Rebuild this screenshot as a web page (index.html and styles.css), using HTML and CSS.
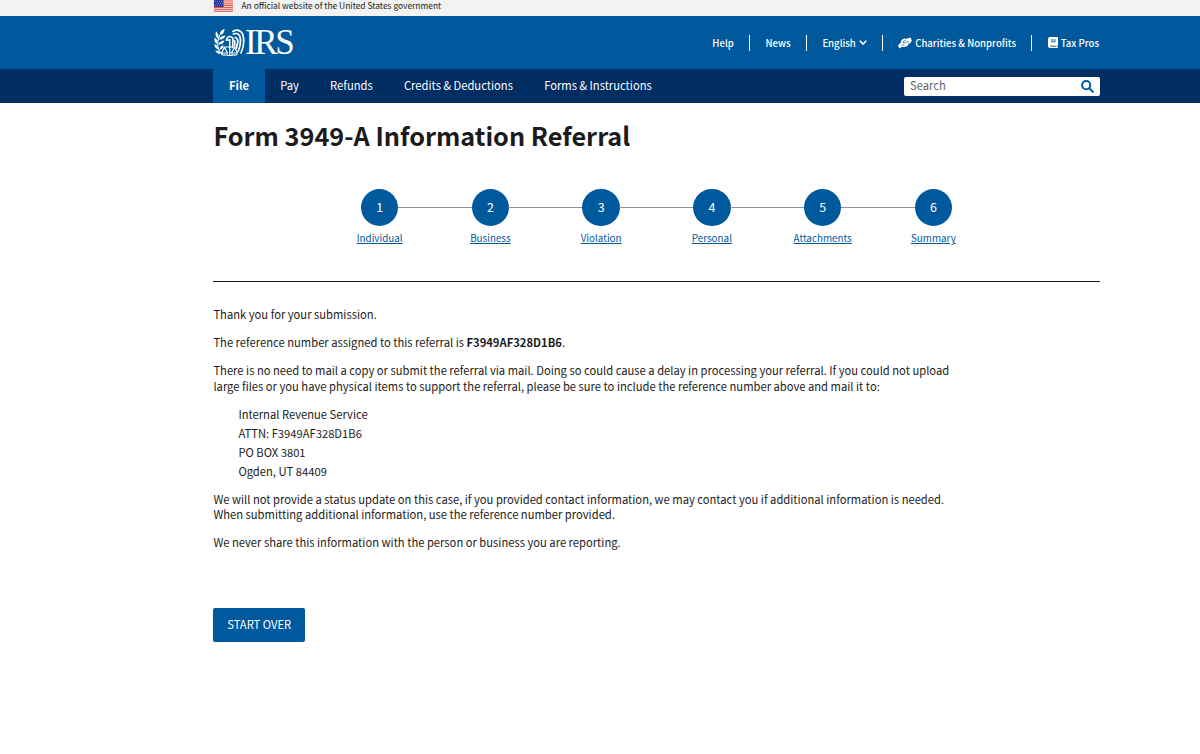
FILE: index.html
```
<!DOCTYPE html>
<html lang="en">
<head>
  <meta charset="UTF-8">
  <title>Form 3949-A Information Referral</title>
  <link rel="stylesheet" href="styles.css">
</head>
<body>
  <!-- Government banner -->
  <div class="banner">
    <div class="container banner-inner">
      <svg class="flag" viewBox="0 0 19 12">
        <rect width="19" height="12" fill="#f6dcd8"/>
        <path d="M0 1h19M0 3.2h19M0 5.4h19M0 7.6h19M0 9.8h19M0 11.7h19" stroke="#dc5a4c" stroke-width="1.1"/>
        <rect width="9.5" height="7" fill="#2a37a0"/>
        <path d="M1 1.5h8M2 3.5h7M1 5.5h8" stroke="#9aa3dc" stroke-width=".8" stroke-dasharray=".9 1.1"/>
      </svg>
      <span>An official website of the United States government</span>
    </div>
  </div>

  <header>
    <div class="container header-inner">
      <a class="logo" href="#">
        <svg class="eagle" viewBox="0 0 31 29" fill="none" stroke="#fff" stroke-linecap="round">
          <!-- Olive branch -->
          <path d="M8.500 27C3 23 2.500 15 5.500 8" stroke-width="1.100"/>
          <path d="M6 7.500C5.500 4.500 8 2 10.500 1.500 10.500 4.500 9 7 6 7.500zM4 11C1.500 9.500 1 6.500 2 4 4 5.500 5 8 4 11zM5 12C6 9.500 8.500 8 11.500 8 10.500 11 8 12.500 5 12zM3 16.500C.5 15 0 12.500 .5 10 3 11.500 4 13.500 3 16.500zM4.500 17C5.500 14.500 7.500 13.200 10.500 13 9.500 16 7.500 17.500 4.500 17zM4 22C1.500 21 .3 19 .3 16.500 2.800 17.500 4.200 19 4 22zM5.500 22C6 19.500 7.500 18 9.500 17.800 9.500 20.500 8.500 22 5.500 22zM6.500 26.500C4 26.500 2 25 1.200 23 4 23 6 24 6.500 26.500z" fill="#fff" stroke="none"/>
          <!-- Head and body -->
          <path d="M12.300 12.800C12.500 9.500 15 8.500 17.300 9.500c1.800 1 2 3 1.400 5V20M12.300 12.800l3.400-.5V20" stroke-width="1.500"/>
          <!-- Wing feathers -->
          <path d="M19 4C22 1.500 27 2.500 28.800 7c1.700 6 1.200 12-1.800 18.500M19.500 6.500c4-1.500 6.300.5 6.800 4 .5 5 0 9-2 13M21 10c2 0 3 2 2.700 5l-1.400 6M20.500 13l.3 5" stroke-width="1.700"/>
          <!-- Scales -->
          <path d="M15.800 19v8M10 19.500h11M10.500 20l-3 5.500h6zM20.500 20l-3 5.500h6zM8 26.800c1 1 4 1 5 0M18 26.800c1 1 4 1 5 0M13.500 28h4.500" stroke-width="1.200"/>
        </svg>
        <span class="logo-text">IRS</span>
      </a>
      <ul class="top-links">
        <li><a href="#">Help</a></li>
        <li><a href="#">News</a></li>
        <li>
          <a href="#">English
            <svg class="chevron" viewBox="0 0 8 6"><path d="M1.200 1.200L4 4l2.800-2.800" fill="none" stroke="#fff" stroke-width="1.600" stroke-linecap="round"/></svg>
          </a>
        </li>
        <li>
          <a href="#">
            <svg class="hands" viewBox="0 0 14 12">
              <path d="M3.500 3L6 1.500 8.500 1.800 12.500.5 13.800 3.500 12.300 6.200 10.500 6.800 9.500 9 6 10 3.500 10 1.500 11.500 0 8.500 2.500 6z" fill="#fff"/>
              <path d="M8 3L5.300 4.500v1.700l2-.4 2-1.200 1.700.6M3.500 8.300l2.800-.2" fill="none" stroke="#00599c" stroke-width=".7"/>
            </svg>
            Charities &amp; Nonprofits
          </a>
        </li>
        <li>
          <a href="#">
            <svg class="book" viewBox="0 0 10 11">
              <path d="M2 0h7.300q.7 0 .7.700V8l-.5.500V10l.5.300V11H2Q0 11 0 9V2Q0 0 2 0z" fill="#fff"/>
              <path d="M2.800 3h5M2.800 4.800h5M2 9.200h6.500" stroke="#00599c" stroke-width=".9"/>
            </svg>
            Tax Pros
          </a>
        </li>
      </ul>
    </div>
  </header>

  <nav>
    <div class="container nav-inner">
      <ul class="menu">
        <li class="active"><a href="#">File</a></li>
        <li><a href="#">Pay</a></li>
        <li><a href="#">Refunds</a></li>
        <li><a href="#">Credits &amp; Deductions</a></li>
        <li><a href="#">Forms &amp; Instructions</a></li>
      </ul>
      <div class="search">
        <span>Search</span>
        <svg viewBox="0 0 13 13"><circle cx="5.200" cy="5.200" r="4.100"/><path d="M8.400 8.400l3.500 3.500"/></svg>
      </div>
    </div>
  </nav>

  <main class="container">
    <h1>Form 3949-A Information Referral</h1>

    <ol class="steps">
      <li><span class="circle">1</span><a href="#">Individual</a></li>
      <li><span class="circle">2</span><a href="#">Business</a></li>
      <li><span class="circle">3</span><a href="#">Violation</a></li>
      <li><span class="circle">4</span><a href="#">Personal</a></li>
      <li><span class="circle">5</span><a href="#">Attachments</a></li>
      <li><span class="circle">6</span><a href="#">Summary</a></li>
    </ol>

    <div class="content">
      <p>Thank you for your submission.</p>
      <p>The reference number assigned to this referral is <b>F3949AF328D1B6</b>.</p>
      <p>There is no need to mail a copy or submit the referral via mail. Doing so could cause a delay in processing your referral. If you could not upload<br>
        large files or you have physical items to support the referral, please be sure to include the reference number above and mail it to:</p>
      <address>
        Internal Revenue Service<br>
        ATTN: F3949AF328D1B6<br>
        PO BOX 3801<br>
        Ogden, UT 84409
      </address>
      <p>We will not provide a status update on this case, if you provided contact information, we may contact you if additional information is needed.<br>
        When submitting additional information, use the reference number provided.</p>
      <p>We never share this information with the person or business you are reporting.</p>
    </div>

    <button type="button">START OVER</button>
  </main>
</body>
</html>
```
FILE: styles.css
```
* {box-sizing:border-box;}
body {margin:0; background:#fff; color:#1b1b1b; font-family:"Noto Sans CJK SC",sans-serif; font-size:11.21px; overflow:hidden;}
ul, ol {list-style:none; margin:0; padding:0;}
a {color:inherit; text-decoration:none;}
.container {width:886.6px; margin-left:213.4px;}

/* Government banner */
.banner {height:16px; background:#f2f2f2;}
.banner-inner {display:flex; align-items:flex-start; font-size:8.43px; line-height:10px;}
.flag {width:19px; height:12px; margin:0 8.5px 0 .6px;}

/* Header */
header {height:53px; background:#00599c; color:#fff;}
.header-inner {display:flex; justify-content:space-between; height:53px;}
.logo {display:flex; margin-top:11px;}
.eagle {width:31px; height:30px; margin-left:.6px;}
.logo-text {font-family:"Liberation Serif",serif; font-size:35px; line-height:31px; letter-spacing:-2.4px;}
.top-links {display:flex; align-items:center; margin-right:1px; font-size:9.58px; font-weight:500;}
.top-links li {display:flex; align-items:center; height:16px;}
.top-links li + li {margin-left:15px; padding-left:15.8px; border-left:1px solid #fff;}
.top-links a {display:flex; align-items:center; gap:2.8px;}
.chevron {width:8px; height:6px;}
.hands {width:14px; height:12px;}
.book {width:10px; height:11px;}

/* Main menu */
nav {height:34px; background:#002d62; color:#fff;}
.nav-inner {display:flex; justify-content:space-between; align-items:center;}
.menu {display:flex; line-height:33px;}
.menu li {height:34px; padding:0 15.6px;}
.menu .active {background:#00599c; font-weight:bold;}
.search {display:flex; justify-content:space-between; align-items:center; width:196px; height:19px; padding:0 6px; background:#fff; border-radius:2px; color:#666; line-height:17px;}
.search span {margin-bottom:1px;}
.search svg {width:13px; height:13px; fill:none; stroke:#00599c; stroke-width:2; stroke-linecap:round;}

h1 {margin:16px 0 0; font-size:25.27px; line-height:32px;}

/* Step indicator */
.steps {display:flex; width:664.5px; margin:37.6px auto 0; height:92.4px;}
.steps li {position:relative; left:-.2px; flex:1; display:flex; flex-direction:column; align-items:center;}
.steps li + li::before {content:""; position:absolute; top:18.4px; right:calc(50% + 18px); width:calc(100% - 36px); height:1px; background:#8d9297;}
.circle {position:relative; width:37.5px; height:37.5px; border-radius:50%; background:#00599c; color:#fff; font-size:12.5px; line-height:36px; text-align:center;}
.steps a {margin-top:4.4px; color:#00599c; font-size:9.85px; line-height:16px; text-decoration:underline;}

.content {height:326.6px; padding-top:25px; border-top:1px solid #1b1b1b; line-height:15.7px;}
.content p {margin:0 0 12.5px;}
address {margin:-2px 0 11.1px 25px; font-style:normal; line-height:18.8px;}

button {display:block; width:91.6px; height:34.4px; padding:0 0 2px; background:#00599c; border:none; border-radius:2px; color:#fff; font-family:inherit; font-size:11.21px; cursor:pointer;}
```
